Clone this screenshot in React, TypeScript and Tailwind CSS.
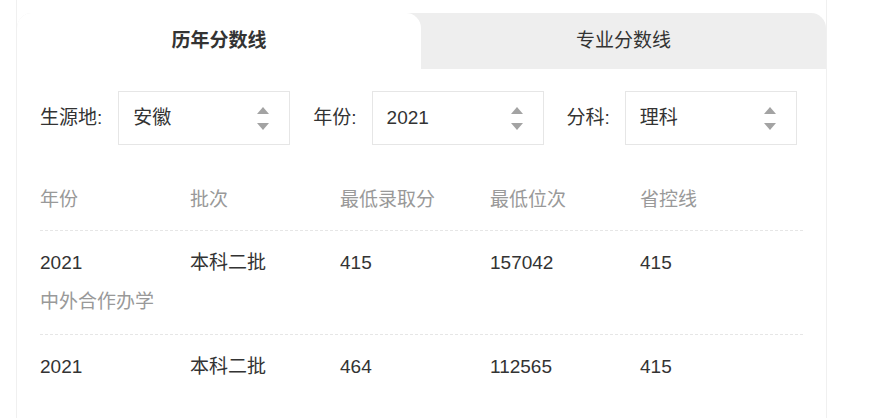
const font = { fontFamily: '"Liberation Sans", "Noto Sans CJK SC", sans-serif' };

function Arrows() {
  return (
    <div className="flex flex-col items-center gap-[9px]">
      <span className="h-0 w-0 border-x-[6px] border-b-[7px] border-x-transparent border-b-[#a3a3a3]" />
      <span className="h-0 w-0 border-x-[6px] border-t-[7px] border-x-transparent border-t-[#a3a3a3]" />
    </div>
  );
}

function SelectBox({ value }: { value: string }) {
  return (
    <div className="flex h-[54px] w-[172px] items-center justify-between border border-[#e6e6e6] bg-white pl-[14px] pr-[20px]">
      <span className="text-[#333]">{value}</span>
      <Arrows />
    </div>
  );
}

const cols = ["年份", "批次", "最低录取分", "最低位次", "省控线"];

const rows = [
  { cells: ["2021", "本科二批", "415", "157042", "415"], note: "中外合作办学" },
  { cells: ["2021", "本科二批", "464", "112565", "415"] },
];

export default function App() {
  return (
    <div className="min-h-[418px] bg-white text-[19px]" style={font}>
      <div className="ml-[16px] min-h-[418px] w-[811px] border-x border-[#f0f0f0] pt-[13px]">
        <div className="flex h-[56px] rounded-t-[15px] bg-[#eeeeee]">
          <div className="flex w-[404px] items-center justify-center rounded-t-[15px] bg-white font-bold text-[#333]">
            历年分数线
          </div>
          <div className="flex flex-1 items-center justify-center text-[#333]">专业分数线</div>
        </div>

        <div className="px-[23px]">
          <div className="mt-[22px] flex items-center">
            <span className="mr-[16px] text-[#333]">生源地:</span>
            <SelectBox value="安徽" />
            <span className="ml-[23px] mr-[15px] text-[#333]">年份:</span>
            <SelectBox value="2021" />
            <span className="ml-[23px] mr-[15px] text-[#333]">分科:</span>
            <SelectBox value="理科" />
          </div>

          <div className="mt-[25px] flex h-[61px] items-center border-b border-dashed border-[#e6e6e6] text-[#999]">
            {cols.map((c) => (
              <div key={c} className="w-[150px]">
                {c}
              </div>
            ))}
          </div>

          {rows.map((r, i) => (
            <div key={i} className="border-b border-dashed border-[#e6e6e6] pt-[20px] pb-[20px] last:border-b-0">
              <div className="flex leading-[24px] text-[#333]">
                {r.cells.map((c, j) => (
                  <div key={j} className="w-[150px]">
                    {c}
                  </div>
                ))}
              </div>
              {r.note && <div className="mt-[15px] leading-[24px] text-[#999]">{r.note}</div>}
            </div>
          ))}
        </div>
      </div>
    </div>
  );
}
